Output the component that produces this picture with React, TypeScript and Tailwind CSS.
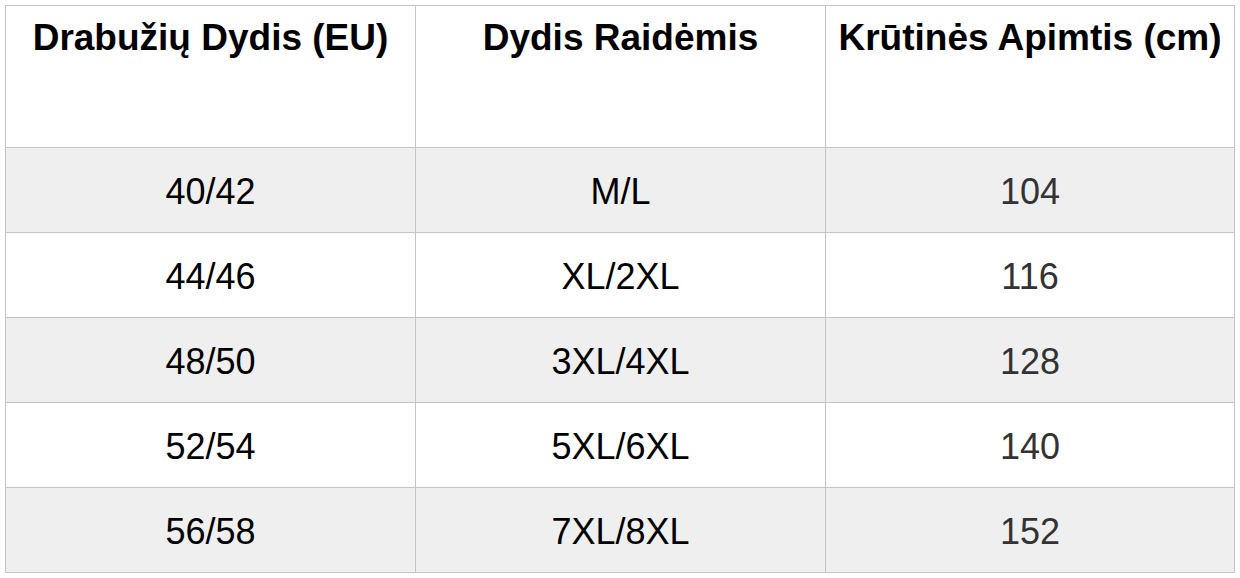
import React from "react";

const rows = [
  ["40/42", "M/L", "104"],
  ["44/46", "XL/2XL", "116"],
  ["48/50", "3XL/4XL", "128"],
  ["52/54", "5XL/6XL", "140"],
  ["56/58", "7XL/8XL", "152"],
];

export default function App() {
  return (
    <div className="w-[1240px] h-[578px] bg-white pt-[5px] pl-[5px]" style={{ fontFamily: '"Liberation Sans", Arial, sans-serif' }}>
      <table className="w-[1229px] border-collapse table-fixed">
        <colgroup>
          <col className="w-[410px]" />
          <col className="w-[410px]" />
          <col className="w-[409px]" />
        </colgroup>
        <thead>
          <tr className="h-[142px]">
            {["Drabužių Dydis (EU)", "Dydis Raidėmis", "Krūtinės Apimtis (cm)"].map((h) => (
              <th key={h} className="border border-[#c4c4c4] align-top text-center font-bold text-[37px] leading-[40px] text-black pt-[12px] px-0 whitespace-nowrap">
                {h}
              </th>
            ))}
          </tr>
        </thead>
        <tbody>
          {rows.map((r, i) => (
            <tr key={i} className={i % 2 === 0 ? "h-[85px] bg-[#efefef]" : "h-[85px] bg-white"}>
              <td className="border border-[#c4c4c4] text-center align-middle text-[36px] text-black pt-[4px]">{r[0]}</td>
              <td className="border border-[#c4c4c4] text-center align-middle text-[36px] text-black pt-[4px]">{r[1]}</td>
              <td className="border border-[#c4c4c4] text-center align-middle text-[36px] text-[#333333] pt-[4px]">{r[2]}</td>
            </tr>
          ))}
        </tbody>
      </table>
    </div>
  );
}
